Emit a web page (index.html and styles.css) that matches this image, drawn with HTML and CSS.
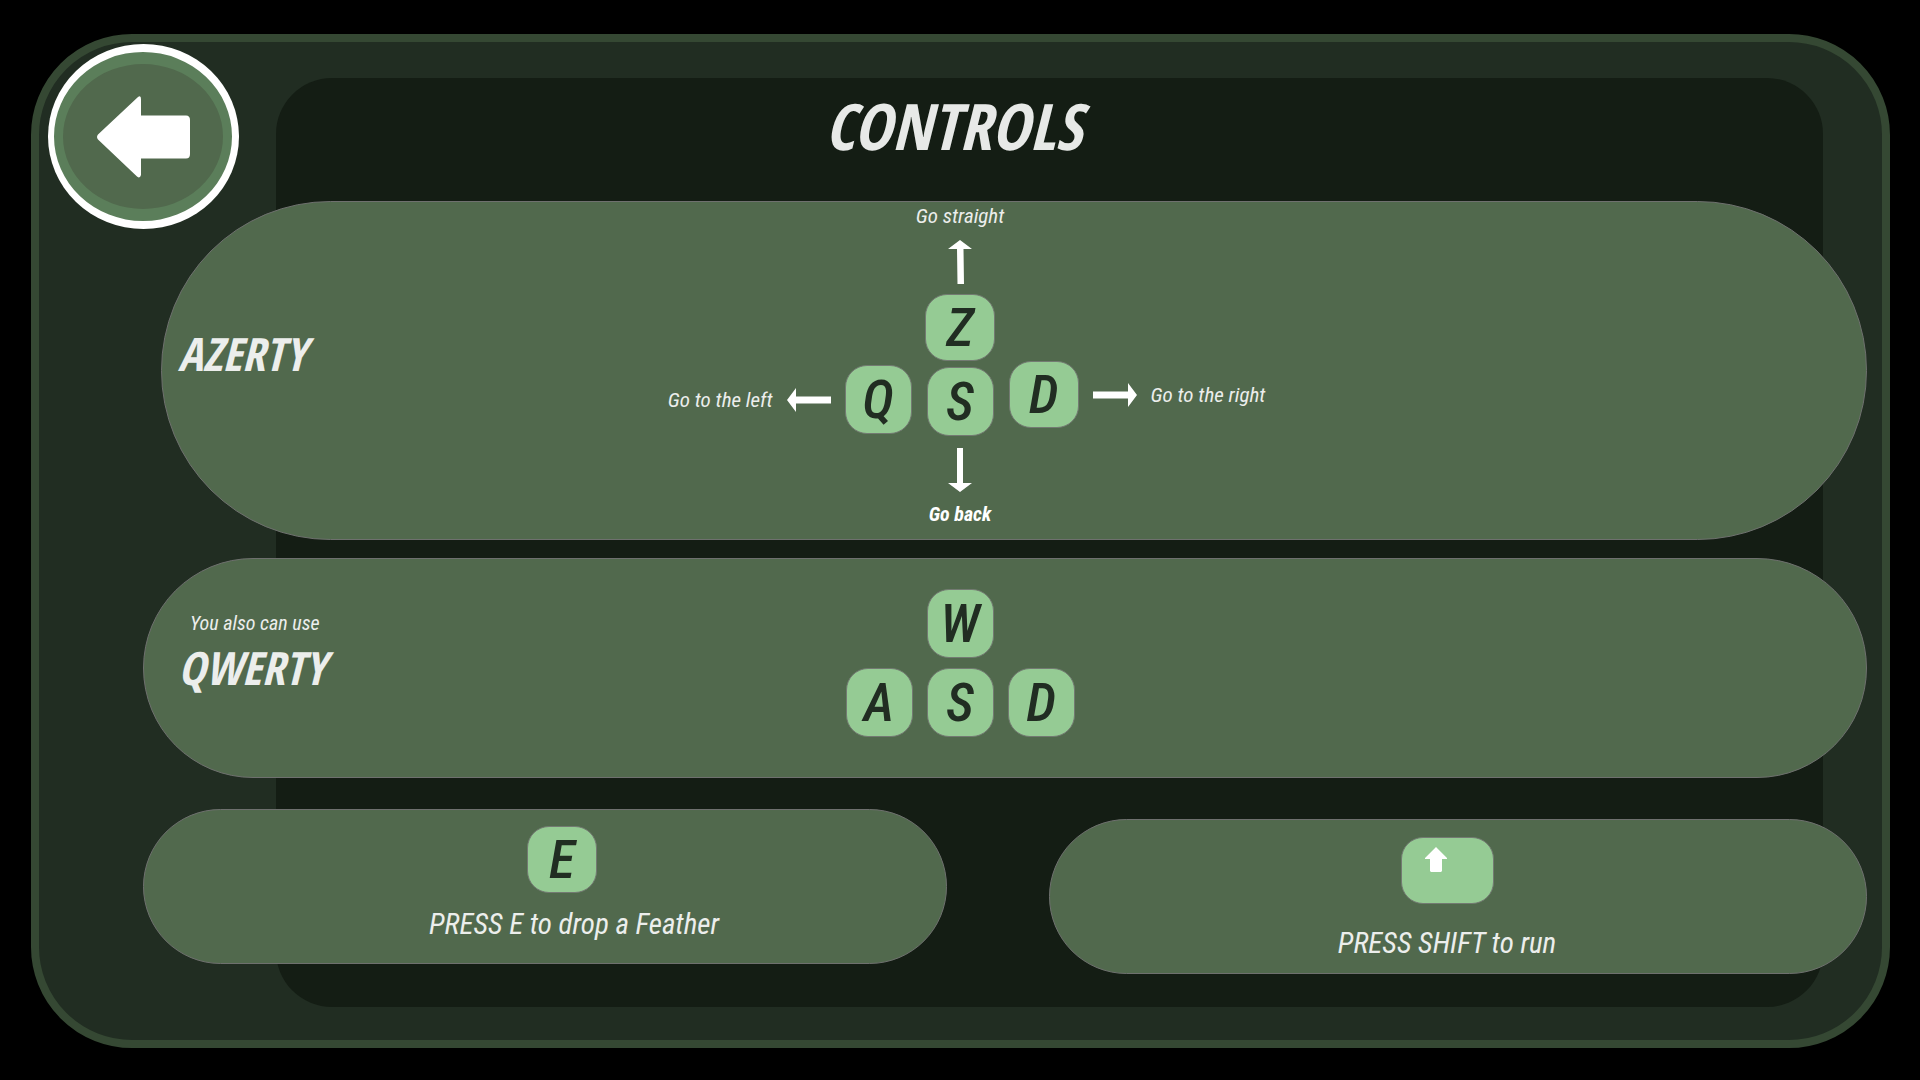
FILE: index.html
```html
<!DOCTYPE html>
<html lang="en">
<head>
<meta charset="utf-8">
<meta name="viewport" content="width=device-width, initial-scale=1">
<title>Controls</title>
<link rel="stylesheet" href="styles.css">
</head>
<body>
<main class="frame">
  <div class="backdrop"></div>

  <div class="content">
    <h1 class="title">CONTROLS</h1>

    <section class="panel panel-azerty">
      <h2 class="layout-name name-azerty">AZERTY</h2>
      <div class="keypad">
        <p class="hint">Go straight</p>
        <svg class="arrow arrow-top" width="24" height="44" viewBox="0 0 24 44" aria-hidden="true"><path d="M12 0 24 9H15.500L16 44H9.500L9 9H0Z"/></svg>
        <kbd class="key key-wide">Z</kbd>
        <div class="key-line">
          <div class="side side-left">
            <p class="hint">Go to the left</p>
            <svg width="44" height="24" viewBox="0 0 44 24" aria-hidden="true"><path d="M0 12 9 0V8.500H44V15.500H9V24Z"/></svg>
            <kbd class="key">Q</kbd>
          </div>
          <kbd class="key key-middle">S</kbd>
          <div class="side side-right">
            <kbd class="key key-wide">D</kbd>
            <svg width="44" height="24" viewBox="0 0 44 24" aria-hidden="true"><path d="M44 12 35 0V8.500H0V15.500H35V24Z"/></svg>
            <p class="hint">Go to the right</p>
          </div>
        </div>
        <svg class="arrow arrow-bottom" width="24" height="44" viewBox="0 0 24 44" aria-hidden="true"><path d="M12 44 24 35H15V0H9V35H0Z"/></svg>
        <p class="hint hint-strong">Go back</p>
      </div>
    </section>

    <section class="panel panel-qwerty">
      <div class="layout-name name-group">
        <p class="hint also">You also can use</p>
        <h2 class="name">QWERTY</h2>
      </div>
      <div class="cluster">
        <kbd class="key">W</kbd>
        <div class="cluster-row">
          <kbd class="key">A</kbd>
          <kbd class="key">S</kbd>
          <kbd class="key">D</kbd>
        </div>
      </div>
    </section>

    <div class="actions">
      <section class="panel action action-feather">
        <kbd class="key key-wide">E</kbd>
        <p class="caption">PRESS E to drop a Feather</p>
      </section>
      <section class="panel action action-run">
        <kbd class="key key-shift" aria-label="Shift"><svg width="22" height="25" viewBox="0 0 22 25" aria-hidden="true"><path d="M11 0 22 11V12H17V24L16 25H6L5 24V12H0V11Z"/></svg></kbd>
        <p class="caption">PRESS SHIFT to run</p>
      </section>
    </div>
  </div>

  <button class="back" type="button" aria-label="Back">
    <span class="back-face">
      <svg width="93" height="82" viewBox="0 0 93 82" aria-hidden="true"><path d="M1 38.500 41 1Q44-1 44 3V19.500H89Q93 19.500 93 24V58Q93 62.500 89 62.500H44V79Q43 83 40 80.500L1 43.500Q-1 41 1 38.500Z"/></svg>
    </span>
  </button>
</main>
</body>
</html>
```
FILE: styles.css
```css
* {
  box-sizing: border-box;
}

body {
  margin: 0;
  min-height: 100vh;
  padding: 34px 30px 33px 31px;
  background: #000;
  color: #eceeec;
  font-family: "Roboto Condensed", Roboto, "Liberation Sans", sans-serif;
  font-style: italic;
}

h1,
h2,
p {
  margin: 0;
}

svg {
  display: block;
  flex: none;
  fill: #fff;
}

.frame {
  position: relative;
  display: grid;
  grid-template-columns: minmax(0, 1fr);
  min-height: calc(100vh - 67px);
  border: 8px solid #354833;
  border-radius: 101px;
  background: #212d22;
}

.backdrop {
  grid-area: 1 / 1;
  margin: 36px 59px 33px 237px;
  border-radius: 56px;
  background: #141d14;
}

.content {
  grid-area: 1 / 1;
  padding: 44px 15px 66px 104px;
}

.title {
  padding-right: 104px;
  margin-bottom: 35px;
  font-family: "Open Sans Condensed", "Open Sans", sans-serif;
  font-size: 64px;
  font-weight: 700;
  line-height: 80px;
  text-align: center;
  color: #e7e9e7;
}

.panel {
  border: 1px solid #6e706e;
  border-radius: 170px;
  background: #51694d;
}

.panel-azerty,
.panel-qwerty {
  display: grid;
  grid-template-columns: minmax(0, 1fr);
}

.panel-azerty {
  margin-left: 18px;
  padding: 2px 124px 13px 16px;
}

.panel-qwerty {
  margin-top: 18px;
  padding: 30px 124px 40px 34px;
}

.layout-name {
  grid-area: 1 / 1;
  place-self: center start;
}

.name-azerty,
.name {
  font-family: "Open Sans Condensed", "Open Sans", sans-serif;
  font-size: 46px;
  font-weight: 700;
  line-height: 64px;
}

.name-azerty {
  padding-bottom: 24px;
}

.name-group {
  padding-bottom: 16px;
}

.also {
  padding-left: 12px;
}

.hint {
  font-size: 21px;
  line-height: 24px;
  white-space: nowrap;
}

.hint.also,
.hint-strong {
  font-size: 20px;
}

.hint-strong {
  font-weight: 700;
  color: #fff;
}

.keypad,
.cluster {
  grid-area: 1 / 1;
  display: flex;
  flex-direction: column;
  align-items: center;
}

.arrow-top {
  margin: 12px 0 10px;
}

.arrow-bottom {
  margin: 12px 0 10px;
}

.key {
  display: flex;
  align-items: center;
  justify-content: center;
  flex: none;
  width: 67px;
  height: 69px;
  border: 1px solid #737a72;
  border-radius: 22px;
  background: #95cb94;
  color: #212d22;
  font-family: inherit;
  font-size: 54px;
  font-weight: 500;
  line-height: 64px;
}

.key-wide {
  width: 70px;
  height: 67px;
}

.key-line {
  display: grid;
  grid-template-columns: 1fr auto 1fr;
  align-self: stretch;
  column-gap: 15px;
  height: 75px;
}

.key-middle {
  align-self: end;
}

.side {
  display: flex;
  align-items: center;
  gap: 14px;
}

.side-left {
  align-self: end;
  justify-content: flex-end;
  padding-bottom: 2px;
}

.side-right {
  align-self: start;
}

.cluster {
  gap: 10px;
}

.cluster-row {
  display: flex;
  gap: 14px;
}

.actions {
  display: grid;
  grid-template-columns: 804fr 818fr;
  align-items: start;
  gap: 102px;
  margin-top: 31px;
}

.action {
  display: flex;
  flex-direction: column;
  align-items: center;
}

.action-feather {
  gap: 11px;
  padding: 16px 0 19px 34px;
}

.action-feather .caption {
  padding-left: 24px;
}

.action-run {
  gap: 19px;
  margin-top: 10px;
  padding: 17px 22px 10px 0;
}

.caption {
  font-size: 29px;
  line-height: 40px;
}

.key-shift {
  align-items: flex-start;
  justify-content: flex-start;
  width: 93px;
  height: 67px;
  padding: 9px 23px;
}

.back {
  position: absolute;
  top: 2px;
  left: 9px;
  width: 191px;
  height: 185px;
  padding: 0;
  border: 0;
  border-radius: 50%;
  background: #fff;
  cursor: pointer;
}

.back-face {
  display: flex;
  align-items: center;
  justify-content: center;
  width: 178px;
  height: 169px;
  margin: 0 7px 0 6px;
  border: solid #5b7e5a;
  border-width: 12px 9px;
  border-radius: 50%;
  background: #51694d;
}
```
